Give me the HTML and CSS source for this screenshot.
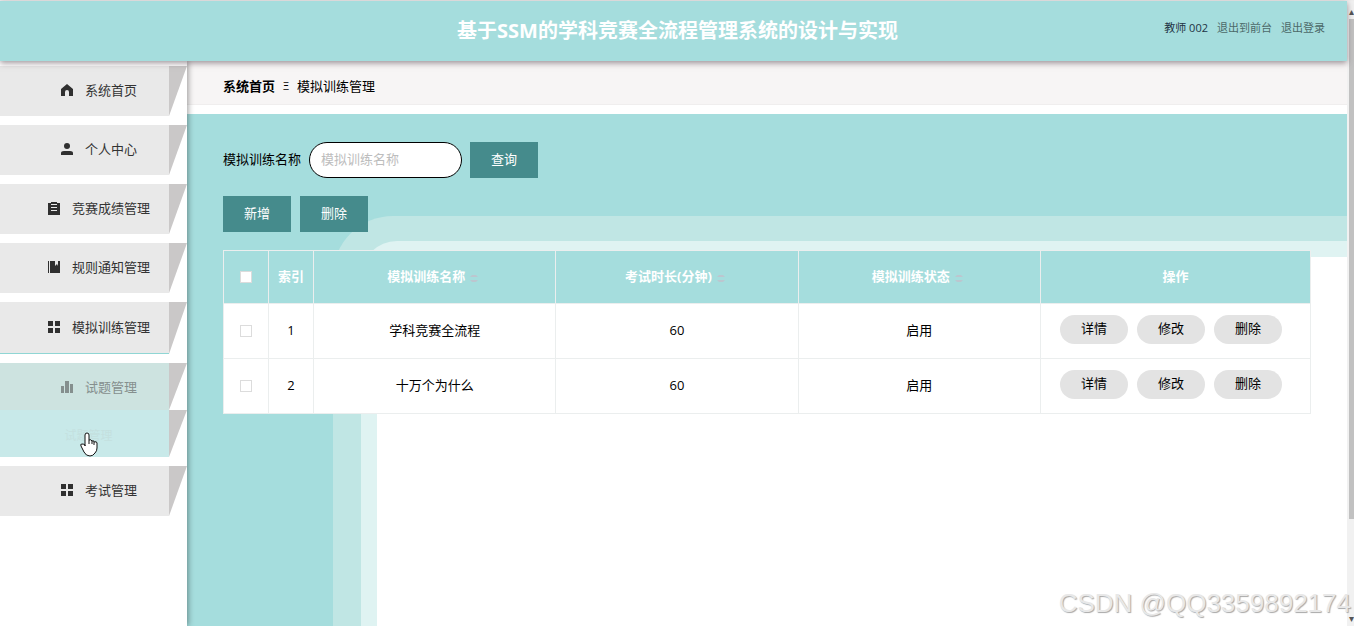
FILE: index.html
```html
<!DOCTYPE html>
<html lang="zh-CN">
<head>
<meta charset="utf-8">
<title>模拟训练管理</title>
<link rel="stylesheet" href="styles.css">
</head>
<body>
<svg class="defs" aria-hidden="true">
  <symbol id="grid" viewBox="0 0 14 14"><path d="M1 1h5v5H1zM8 1h5v5H8zM1 8h5v5H1zM8 8h5v5H8z"/></symbol>
  <symbol id="sort" viewBox="0 0 8 12"><path d="M0 5l2-2h4l2 2zM0 8h8l-2 2H2z"/></symbol>
</svg>
<div class="window">
  <div class="app">
    <header class="header">
      <h1 class="title">基于SSM的学科竞赛全流程管理系统的设计与实现</h1>
      <div class="user">
        <span class="user-name">教师 002</span>
        <a class="user-link" href="#">退出到前台</a>
        <a class="user-link" href="#">退出登录</a>
      </div>
    </header>
    <div class="body">
      <nav class="sidebar">
        <div class="item"><a class="link" href="#"><svg class="icon" viewBox="0 0 14 14"><path d="M7 1L1 6v7h4V9a2 2 0 0 1 4 0v4h4V6z"/></svg>系统首页</a></div>
        <div class="item"><a class="link" href="#"><svg class="icon" viewBox="0 0 14 14"><circle cx="7" cy="4" r="3"/><path d="M1 13v-2q0-2 3-2h6q3 0 3 2v2z"/></svg>个人中心</a></div>
        <div class="item"><a class="link" href="#"><svg class="icon" viewBox="0 0 14 14"><path fill-rule="evenodd" d="M1 2h3V1h6v1h3v12H1zM4 3v1h6V3zM4 6v1h6V6zM4 9v1h6V9z"/></svg>竞赛成绩管理</a></div>
        <div class="item"><a class="link" href="#"><svg class="icon" viewBox="0 0 14 14"><path d="M1 1h1v12H1zM3 1h5v5l2-2 1 2V1h2v12H3z"/></svg>规则通知管理</a></div>
        <div class="item open"><a class="link" href="#"><svg class="icon"><use href="#grid"/></svg>模拟训练管理</a></div>
        <div class="group">
          <div class="item fading"><a class="link" href="#"><svg class="icon" viewBox="0 0 14 14"><path d="M1 6h3v7H1zM5 1h4v12H5zM10 4h3v9h-3z"/></svg>试题管理</a></div>
          <div class="item hovered"><a class="link" href="#">试题管理</a>
            <svg class="cursor" viewBox="0 0 18 25"><path d="M5 14V3q0-2 2-2t2 2v5q2-1 3 1 2-1 2 1 3-1 3 1v5q0 3-2 5-2 3-5 3-4 0-6-4l-3-6q-1-2 1-2 2 0 3 1z"/><path d="M9 8v4M12 9v3M14 10v3"/></svg>
          </div>
        </div>
        <div class="item"><a class="link" href="#"><svg class="icon"><use href="#grid"/></svg>考试管理</a></div>
      </nav>
      <main class="main">
        <div class="crumbs"><strong>系统首页</strong><span class="crumb-mark">Ξ</span><span>模拟训练管理</span></div>
        <section class="content">
          <form class="row search">
            <label class="label" for="name">模拟训练名称</label>
            <input class="field" id="name" type="text" placeholder="模拟训练名称">
            <button class="button" type="button">查询</button>
          </form>
          <div class="row">
            <button class="button" type="button">新增</button>
            <button class="button" type="button">删除</button>
          </div>
          <table class="table">
            <colgroup><col class="col-small"><col class="col-small"><col><col><col><col class="col-actions"></colgroup>
            <thead>
              <tr>
                <th><input class="check" type="checkbox" aria-label="全选"></th>
                <th>索引</th>
                <th>模拟训练名称<svg class="sort"><use href="#sort"/></svg></th>
                <th>考试时长(分钟)<svg class="sort"><use href="#sort"/></svg></th>
                <th>模拟训练状态<svg class="sort"><use href="#sort"/></svg></th>
                <th>操作</th>
              </tr>
            </thead>
            <tbody>
              <tr>
                <td><input class="check" type="checkbox" aria-label="选择 1"></td>
                <td>1</td><td>学科竞赛全流程</td><td>60</td><td>启用</td>
                <td><div class="actions"><button class="pill" type="button">详情</button><button class="pill" type="button">修改</button><button class="pill" type="button">删除</button></div></td>
              </tr>
              <tr>
                <td><input class="check" type="checkbox" aria-label="选择 2"></td>
                <td>2</td><td>十万个为什么</td><td>60</td><td>启用</td>
                <td><div class="actions"><button class="pill" type="button">详情</button><button class="pill" type="button">修改</button><button class="pill" type="button">删除</button></div></td>
              </tr>
            </tbody>
          </table>
        </section>
      </main>
    </div>
  </div>
  <div class="scrollbar"><span class="arrow">▴</span><div class="thumb"></div><span class="arrow down">▾</span></div>
  <div class="watermark">CSDN @QQ3359892174</div>
</div>
</body>
</html>
```
FILE: styles.css
```css
* {
  box-sizing: border-box;
}

body {
  margin: 0;
  overflow: hidden;
  color: #000;
  background: #fff;
  font-family: "Open Sans", "Noto Sans CJK SC", sans-serif;
  font-size: 13px;
  line-height: 20px;
}

button,
input {
  font: inherit;
}

a {
  color: inherit;
  text-decoration: none;
}

.defs {
  display: none;
}

.window {
  position: relative;
  display: flex;
  height: 100vh;
  border-top: 1px solid #efeeee;
}

.app {
  flex: 1;
  display: flex;
  flex-direction: column;
}

.header {
  position: relative;
  z-index: 2;
  display: grid;
  grid-template-columns: 1fr auto 1fr;
  align-items: center;
  height: 60px;
  padding: 0 22px 0 30px;
  background: #a5dddd;
  box-shadow: 0 2px 6px rgba(60, 40, 50, 0.5);
}

.title {
  grid-column: 2;
  margin: 0;
  color: #fff;
  font-size: 20px;
  line-height: 30px;
}

.user {
  display: flex;
  justify-content: flex-end;
  gap: 9px;
  padding-bottom: 6px;
  font-size: 11px;
}

.user-name {
  color: #234;
}

.user-link {
  color: #4c6969;
}

.body {
  flex: 1;
  display: flex;
}

.sidebar {
  position: relative;
  z-index: 1;
  display: flex;
  flex-direction: column;
  gap: 9px;
  width: 187px;
  padding-top: 5px;
  background: #fff;
  box-shadow: 1px 0 6px rgba(0, 0, 0, 0.4);
}

.item {
  position: relative;
  display: flex;
  height: 50px;
}

.item::after {
  content: "";
  width: 18px;
  background: #cac8c8;
  clip-path: polygon(0 0, 100% 0, 0 100%);
}

.link {
  flex: 1;
  display: flex;
  align-items: center;
  justify-content: center;
  gap: 11px;
  padding: 0 0 2px 28px;
  color: #333;
  background: #e9e9e9;
}

.icon {
  width: 14px;
  height: 14px;
  fill: #303030;
}

.open {
  height: 52px;
}

.open .link {
  border-bottom: 1px solid #8fd6d4;
}

.group .item {
  height: 47px;
}

.fading .link {
  padding-bottom: 0;
  color: #858f8e;
  background: #cde3e0;
}

.fading .icon {
  fill: #858f8e;
}

.hovered .link {
  padding: 4px 0 0 8px;
  color: #c4e0df;
  background: #c8e9e9;
  font-size: 12px;
}

.cursor {
  position: absolute;
  top: 22px;
  left: 80px;
  width: 18px;
  height: 25px;
  fill: #fff;
  stroke: #111;
}

.main {
  flex: 1;
  display: flex;
  flex-direction: column;
  gap: 9px;
}

.crumbs {
  display: flex;
  align-items: center;
  gap: 8px;
  height: 44px;
  padding: 6px 36px 0;
  background: #f7f5f5;
  border-bottom: 1px solid #f0eeee;
}

.crumb-mark {
  font-size: 11px;
}

.content {
  position: relative;
  flex: 1;
  display: flex;
  flex-direction: column;
  gap: 18px;
  padding: 28px 36px;
  overflow: hidden;
  background: #a5dddd;
}

.content::before {
  content: "";
  position: absolute;
  inset: 102px 0 0 146px;
  border-top-left-radius: 60px;
  background: #c0e6e4;
}

.content::after {
  content: "";
  position: absolute;
  inset: 127px 0 0 174px;
  border: solid #dff3f2;
  border-width: 16px 0 0 16px;
  border-top-left-radius: 36px;
  background: #fff;
}

.row,
.table {
  position: relative;
  z-index: 1;
}

.row {
  display: flex;
  align-items: center;
  gap: 9px;
}

.search {
  gap: 8px;
}

.label {
  padding-bottom: 2px;
}

.field {
  width: 153px;
  height: 36px;
  padding: 0 11px 2px;
  border: 1px solid #000;
  border-radius: 18px;
  background: #fff;
}

.field::placeholder {
  color: #bdbdbd;
}

.button {
  width: 68px;
  height: 36px;
  padding: 0 0 2px;
  border: 0;
  color: #fff;
  background: #458b8c;
}

.table {
  width: 100%;
  table-layout: fixed;
  border-collapse: collapse;
  background: #fff;
  text-align: center;
}

.col-small {
  width: 45px;
}

.col-actions {
  width: 270px;
}

.table th,
.table td {
  height: 55px;
  padding: 0 0 2px;
  border: 1px solid #ebeeee;
}

.table th {
  height: 53px;
  color: #fff;
  background: #a5dddd;
}

.check {
  appearance: none;
  display: block;
  width: 12px;
  height: 12px;
  margin: 2px auto 0;
  border: 1px solid #dcdcdc;
  background: #fff;
}

.sort {
  width: 8px;
  height: 12px;
  margin: 0 4px 0 5px;
  vertical-align: middle;
  fill: #bcc6cf;
}

.actions {
  display: flex;
  gap: 9px;
  padding: 0 0 2px 19px;
}

.pill {
  width: 68px;
  height: 29px;
  padding: 0 0 2px;
  border: 0;
  border-radius: 15px;
  background: #e3e3e3;
}

.scrollbar {
  display: flex;
  flex-direction: column;
  width: 7px;
  padding-left: 2px;
  overflow: hidden;
  background: #f1f1f1;
}

.arrow {
  height: 18px;
  color: #555;
  font-size: 10px;
}

.down {
  margin-top: auto;
}

.thumb {
  height: 80%;
  background: #c1c1c1;
}

.watermark {
  position: absolute;
  right: 3px;
  bottom: 8px;
  z-index: 3;
  color: #e8e8e8;
  font-family: "Liberation Sans", sans-serif;
  font-size: 26px;
  line-height: 30px;
  text-shadow: 1px 1px 1px #a8a8a8;
}
```
